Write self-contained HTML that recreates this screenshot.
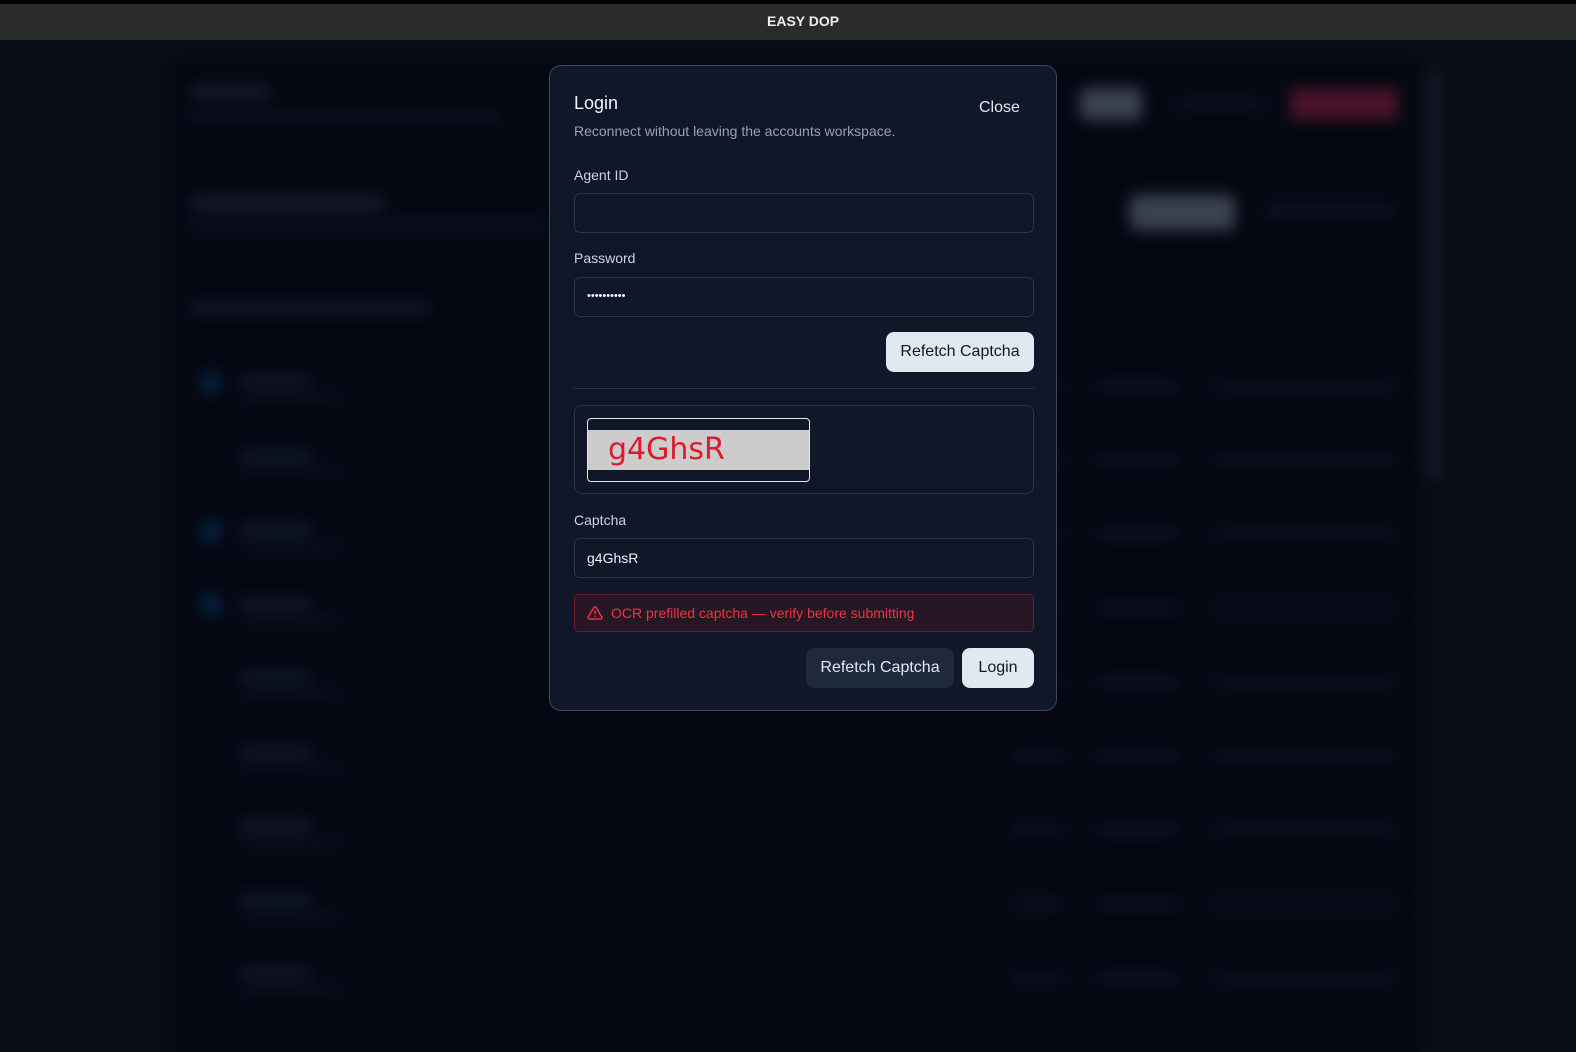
<!DOCTYPE html>
<html><head><meta charset="utf-8"><style>
*{box-sizing:border-box;margin:0;padding:0}
html{overflow:hidden}
body{width:1576px;height:1052px;overflow:hidden;background:#090d18;font-family:"Liberation Sans",sans-serif;position:relative}
.top{position:absolute;left:0;top:0;width:1576px;height:40px;background:#2b2b2b;border-top:4px solid #000;color:#eee;font-weight:bold;font-size:14px;line-height:35px}
.bg{position:absolute;left:0;top:40px;width:1576px;height:1012px;filter:blur(7px)}
.b{position:absolute;border-radius:6px}
.modal{position:absolute;left:549px;top:65px;width:508px;height:646px;background:#0f1729;border:1px solid #3a4a5e;border-radius:12px;color:#e2e8f0}
.a{position:absolute}
.lbl{font-size:14px;color:#cbd5e1}
.inp{position:absolute;left:24px;width:460px;height:40px;border:1px solid #2a3648;border-radius:6px;background:#0f1729;font-size:14px;color:#f1f5f9;padding-left:12px;line-height:38px}
.btn{position:absolute;height:40px;border-radius:8px;font-size:16px;text-align:center;line-height:40px}
</style></head><body>
<div class="top"><span style="position:absolute;left:767px">EASY DOP</span></div>
<div class="bg">
 <div class="b" style="left:170px;top:20px;width:1250px;height:1000px;background:#050813"></div>
 <div class="b" style="left:1428px;top:30px;width:12px;height:410px;background:#171b27"></div>
 <div class="b" style="left:190px;top:45px;width:80px;height:14px;background:#171b28"></div>
 <div class="b" style="left:190px;top:72px;width:310px;height:10px;background:#0e1322"></div>
 <div class="b" style="left:1080px;top:48px;width:62px;height:32px;background:#3b4150"></div>
 <div class="b" style="left:1175px;top:58px;width:90px;height:10px;background:#0e1322"></div>
 <div class="b" style="left:1290px;top:48px;width:108px;height:32px;background:#4a1328"></div>
 <div class="b" style="left:190px;top:155px;width:195px;height:16px;background:#13182a"></div>
 <div class="b" style="left:190px;top:180px;width:360px;height:10px;background:#0d1222"></div>
 <div class="b" style="left:1130px;top:155px;width:105px;height:35px;background:#3b4150"></div>
 <div class="b" style="left:1265px;top:165px;width:130px;height:12px;background:#0e1322"></div>
 <div class="b" style="left:190px;top:262px;width:240px;height:12px;background:#11172a"></div>
 <div class="b" style="left:200px;top:332px;width:22px;height:22px;border-radius:50%;background:#06223f"></div>
 <div class="b" style="left:200px;top:480px;width:22px;height:22px;border-radius:50%;background:#06223f"></div>
 <div class="b" style="left:200px;top:554px;width:22px;height:22px;border-radius:50%;background:#06223f"></div>
</div>
<div class="bg" id="rows"></div>
<script>
var r=document.getElementById('rows'),h='';
for(var i=0;i<9;i++){var y=340+i*74;
h+='<div class="b" style="left:238px;top:'+(y-4)+'px;width:75px;height:12px;background:#121829"></div>';
h+='<div class="b" style="left:240px;top:'+(y+14)+'px;width:105px;height:8px;background:#0c1120"></div>';
h+='<div class="b" style="left:1010px;top:'+(y+1)+'px;width:55px;height:10px;background:#0d1222"></div>';
h+='<div class="b" style="left:1095px;top:'+(y+1)+'px;width:85px;height:10px;background:#0e1323"></div>';
h+='<div class="b" style="left:1210px;top:'+(y+1)+'px;width:190px;height:10px;background:#0c1120"></div>';}
r.innerHTML=h;
</script>
<div class="modal">
 <div class="a" style="left:24px;top:27px;font-size:18px;color:#f1f5f9">Login</div>
 <div class="a" style="left:24px;top:57px;font-size:14px;color:#94a3b8">Reconnect without leaving the accounts workspace.</div>
 <div class="a" style="left:429px;top:33px;font-size:16px;color:#e2e8f0">Close</div>
 <div class="a lbl" style="left:24px;top:101px">Agent ID</div>
 <div class="inp" style="top:127px"></div>
 <div class="a lbl" style="left:24px;top:184px">Password</div>
 <div class="inp" style="top:211px;font-size:11px;line-height:36px">••••••••••</div>
 <div class="btn" style="left:336px;top:266px;width:148px;background:#e2e8f0;color:#0f172a">Refetch Captcha</div>
 <div class="a" style="left:24px;top:322px;width:460px;height:1px;background:#2a3648"></div>
 <div class="a" style="left:24px;top:339px;width:460px;height:89px;border:1px solid #2a3648;border-radius:8px">
  <div class="a" style="left:12px;top:12px;width:223px;height:64px;border:1px solid #e5e7eb;border-radius:4px;background:#0f1729;overflow:hidden">
   <div class="a" style="left:0;top:11px;width:222px;height:40px;background:#cccccc;color:#e0192a;font-size:30px;padding-left:20px;line-height:40px;font-family:'DejaVu Sans',sans-serif;letter-spacing:0px">g4GhsR</div>
  </div>
 </div>
 <div class="a lbl" style="left:24px;top:446px">Captcha</div>
 <div class="inp" style="top:472px">g4GhsR</div>
 <div class="a" style="left:24px;top:528px;width:460px;height:38px;border:1px solid #6b1a27;border-radius:4px;background:#271626;color:#ef3340;font-size:14px;line-height:36px;padding-left:36px">
  <svg class="a" style="left:12px;top:10px" width="16" height="16" viewBox="0 0 24 24" fill="none" stroke="#ef3340" stroke-width="2.2" stroke-linecap="round" stroke-linejoin="round"><path d="M10.3 3.9L1.8 18a2 2 0 0 0 1.7 3h17a2 2 0 0 0 1.7-3L13.7 3.9a2 2 0 0 0-3.4 0z"/><path d="M12 9v4M12 17h.01"/></svg>
  OCR prefilled captcha — verify before submitting</div>
 <div class="btn" style="left:256px;top:582px;width:148px;background:#1e293b;color:#e2e8f0">Refetch Captcha</div>
 <div class="btn" style="left:412px;top:582px;width:72px;background:#e2e8f0;color:#0f172a">Login</div>
</div>
</body></html>
